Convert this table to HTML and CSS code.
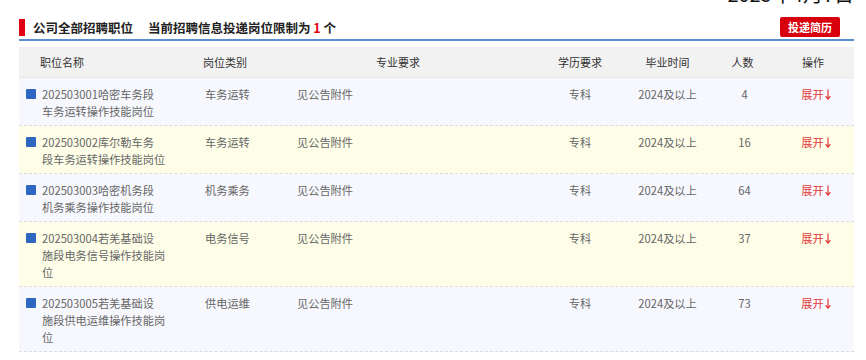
FILE: index.html
```html
<!DOCTYPE html>
<html lang="zh-CN">
<head>
<meta charset="utf-8">
<title>公司全部招聘职位</title>
<link rel="stylesheet" href="styles.css">
</head>
<body>
<div class="dateline"><span class="date">2025年4月7日</span></div>
<div class="panel">
  <div class="heading">
    <div class="title">
      <span class="mark"></span>
      <span class="t-main">公司全部招聘职位</span>
      <span class="t-sub">当前招聘信息投递岗位限制为 <em>1</em> 个</span>
    </div>
    <button class="apply">投递简历</button>
  </div>
  <div class="table">
    <div class="row head">
      <div class="c c1">职位名称</div>
      <div class="c c2">岗位类别</div>
      <div class="c c3">专业要求</div>
      <div class="c c4">学历要求</div>
      <div class="c c5">毕业时间</div>
      <div class="c c6">人数</div>
      <div class="c c7">操作</div>
    </div>
    <div class="row">
      <div class="c c1"><span class="sq"></span><span class="name">202503001哈密车务段<br>车务运转操作技能岗位</span></div>
      <div class="c c2">车务运转</div>
      <div class="c c3">见公告附件</div>
      <div class="c c4">专科</div>
      <div class="c c5">2024及以上</div>
      <div class="c c6">4</div>
      <div class="c c7"><a class="open">展开<svg class="arr" width="6" height="11" viewBox="0 0 6 11"><path d="M3 0.5V10M0.6 7.2L3 10.2L5.4 7.2" fill="none" stroke="currentColor" stroke-width="1.2"/></svg></a></div>
    </div>
    <div class="row">
      <div class="c c1"><span class="sq"></span><span class="name">202503002库尔勒车务<br>段车务运转操作技能岗位</span></div>
      <div class="c c2">车务运转</div>
      <div class="c c3">见公告附件</div>
      <div class="c c4">专科</div>
      <div class="c c5">2024及以上</div>
      <div class="c c6">16</div>
      <div class="c c7"><a class="open">展开<svg class="arr" width="6" height="11" viewBox="0 0 6 11"><path d="M3 0.5V10M0.6 7.2L3 10.2L5.4 7.2" fill="none" stroke="currentColor" stroke-width="1.2"/></svg></a></div>
    </div>
    <div class="row">
      <div class="c c1"><span class="sq"></span><span class="name">202503003哈密机务段<br>机务乘务操作技能岗位</span></div>
      <div class="c c2">机务乘务</div>
      <div class="c c3">见公告附件</div>
      <div class="c c4">专科</div>
      <div class="c c5">2024及以上</div>
      <div class="c c6">64</div>
      <div class="c c7"><a class="open">展开<svg class="arr" width="6" height="11" viewBox="0 0 6 11"><path d="M3 0.5V10M0.6 7.2L3 10.2L5.4 7.2" fill="none" stroke="currentColor" stroke-width="1.2"/></svg></a></div>
    </div>
    <div class="row">
      <div class="c c1"><span class="sq"></span><span class="name">202503004若羌基础设<br>施段电务信号操作技能岗<br>位</span></div>
      <div class="c c2">电务信号</div>
      <div class="c c3">见公告附件</div>
      <div class="c c4">专科</div>
      <div class="c c5">2024及以上</div>
      <div class="c c6">37</div>
      <div class="c c7"><a class="open">展开<svg class="arr" width="6" height="11" viewBox="0 0 6 11"><path d="M3 0.5V10M0.6 7.2L3 10.2L5.4 7.2" fill="none" stroke="currentColor" stroke-width="1.2"/></svg></a></div>
    </div>
    <div class="row">
      <div class="c c1"><span class="sq"></span><span class="name">202503005若羌基础设<br>施段供电运维操作技能岗<br>位</span></div>
      <div class="c c2">供电运维</div>
      <div class="c c3">见公告附件</div>
      <div class="c c4">专科</div>
      <div class="c c5">2024及以上</div>
      <div class="c c6">73</div>
      <div class="c c7"><a class="open">展开<svg class="arr" width="6" height="11" viewBox="0 0 6 11"><path d="M3 0.5V10M0.6 7.2L3 10.2L5.4 7.2" fill="none" stroke="currentColor" stroke-width="1.2"/></svg></a></div>
    </div>
  </div>
</div>
</body>
</html>
```
FILE: styles.css
```css
* { box-sizing: border-box; }
html, body { margin: 0; padding: 0; background: #fff; }
body {
  font-family: "Microsoft YaHei", "Noto Sans CJK SC", sans-serif;
  color: #666;
  width: 866px;
}
.dateline {
  height: 6px;
  overflow: hidden;
  text-align: right;
  padding-right: 12px;
  line-height: 6px;
}
.date {
  display: inline-block;
  vertical-align: top;
  font-size: 20px;
  line-height: 24px;
  margin-top: -18.5px;
  color: #111;
}
.panel {
  margin: 0 12px 0 19px;
}
.heading {
  display: flex;
  justify-content: space-between;
  align-items: flex-end;
  height: 35px;
  padding: 0 14px 3px 0;
  border-bottom: 2px solid #5b8fd0;
}
.title {
  display: flex;
  align-items: flex-end;
  font-size: 12.5px;
  line-height: 17px;
  font-weight: bold;
  color: #222;
}
.mark {
  width: 6px;
  height: 17px;
  background: #e00012;
  margin-right: 8px;
}
.t-main { margin-right: 15px; }
.t-sub em { font-style: normal; color: #e00012; }
.apply {
  width: 60px;
  height: 20px;
  margin: 0 0 -1px 0;
  padding: 0;
  border: 0;
  border-radius: 2px;
  background: #d9000d;
  color: #fff;
  font-family: inherit;
  font-size: 11px;
  font-weight: bold;
  line-height: 20px;
}
.table {
  margin-top: 6px;
}
.row {
  display: grid;
  grid-template-columns: 176px 92px 238px 110px 65px 85px 1fr;
  align-items: start;
  padding: 8px 0 5px;
  border-bottom: 1px dashed #dcdcdc;
  background: #f7f8fe;
  font-size: 11.2px;
  line-height: 17px;
}
.row:nth-child(odd) { background: #fefee8; }
.row.head {
  height: 31px;
  padding: 0;
  align-items: center;
  background: #f2f2f2;
  color: #333;
  font-size: 11px;
  border-bottom: 1px solid #e8e8e8;
}
.c { white-space: nowrap; }
.c1 { display: flex; align-items: flex-start; padding-left: 7px; }
.head .c1 { padding-left: 21px; }
.c2 { padding-left: 10px; }
.head .c2 { padding-left: 8px; }
.c3 { padding-left: 10px; }
.head .c3 { padding-left: 0; padding-right: 16px; text-align: center; }
.c4, .c5, .c6, .c7 { text-align: center; }
.c6 { padding-left: 4px; }
.c7 { padding-right: 13px; padding-left: 6px; }
.head .c6, .head .c7 { padding-left: 0; }
.sq {
  flex: none;
  width: 10px;
  height: 10px;
  margin: 3px 6px 0 0;
  border-radius: 1px;
  background: #2d67c2;
}
.name { white-space: nowrap; }
.open { color: #e03a3a; text-decoration: none; }
.arr { vertical-align: -1px; margin-left: 1px; }
```
